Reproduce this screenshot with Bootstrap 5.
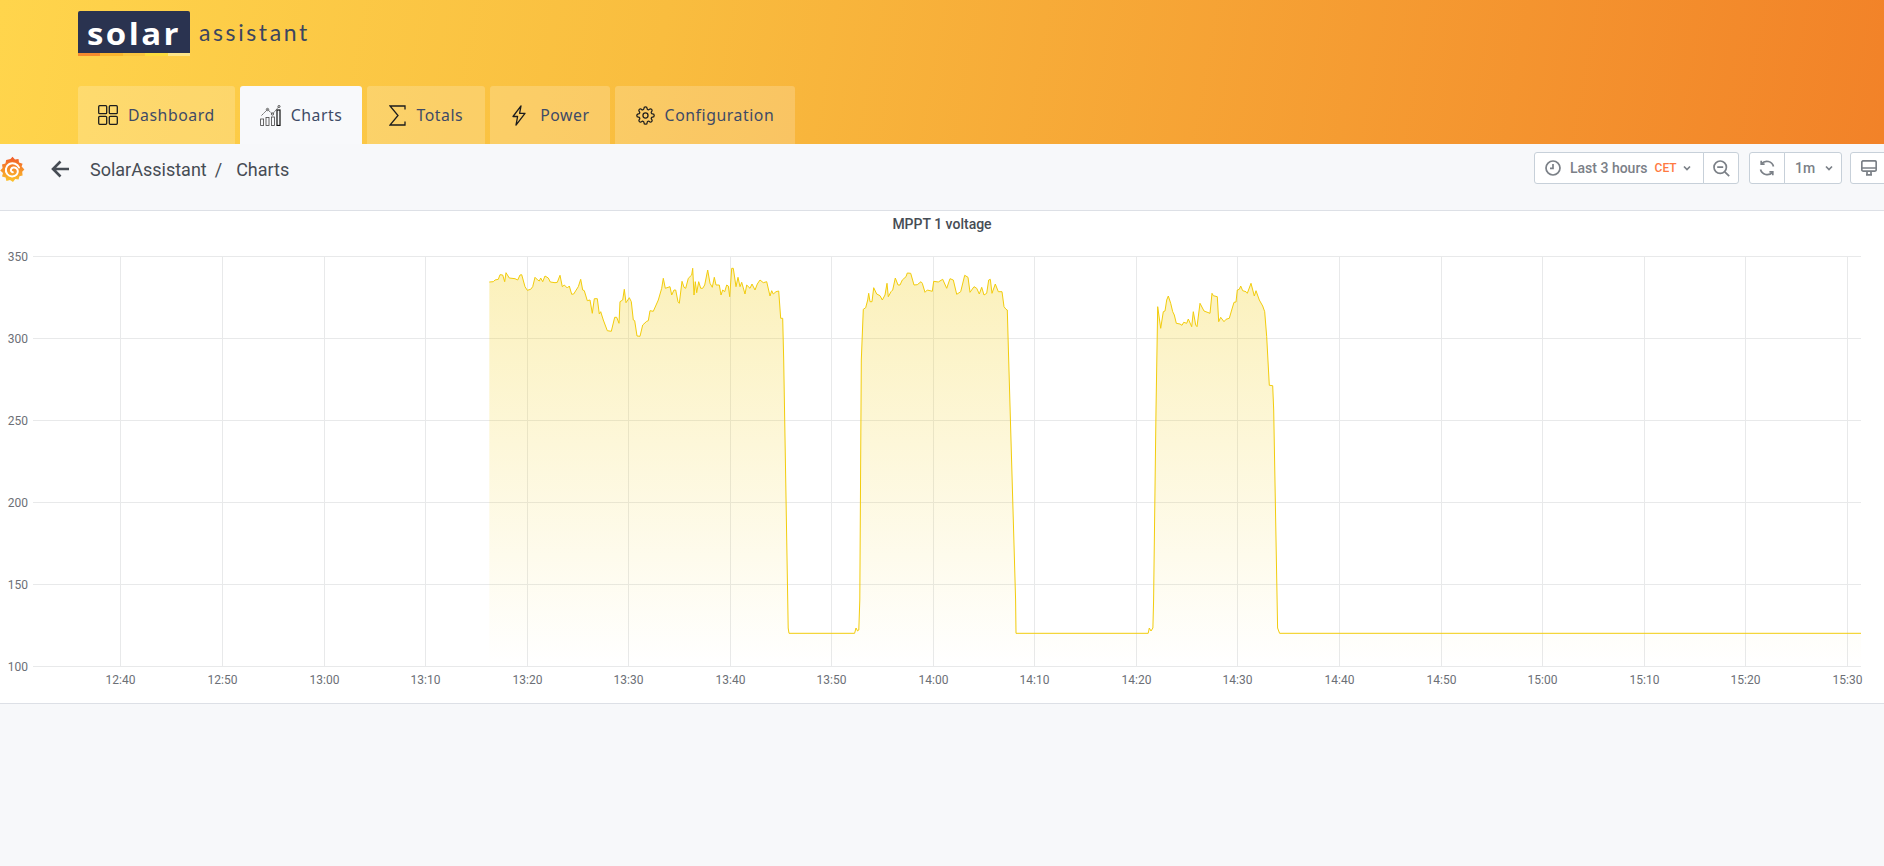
<!DOCTYPE html>
<html lang="en">
<head>
    <meta charset="UTF-8">
    <meta name="viewport" content="width=device-width, initial-scale=1.0">
    <title>Solar Assistant - Charts</title>
    <link href="https://cdn.jsdelivr.net/npm/bootstrap@5.3.0/dist/css/bootstrap.min.css" rel="stylesheet">
    <style>
        html, body { height: 100%; }
        body { background: #f7f8fa; font-family: Roboto, "Liberation Sans", sans-serif; overflow: hidden; }

        .sa-header { height: 144px; padding: 11px 0 0 78px; background: linear-gradient(100deg, #ffd54c 0%, #f9bd3f 35%, #f28228 100%); }
        .sa-logo-box { width: 112px; height: 45px; background: #2a3350; border-radius: 2px; }
        .sa-logo-word { height: 42px; padding-top: 4px; color: #fff; font: 700 30px/38px "Open Sans", sans-serif; letter-spacing: 2.2px; text-align: center; transform: scaleX(1.1); }
        .sa-stripes { height: 3px; }
        .sa-stripes span { flex: 1; }
        .sa-assistant { margin-left: 9px; margin-top: 8px; font: 400 23px/26px Lato, sans-serif; letter-spacing: 2.6px; color: #3b4560; }
        .sa-tabs { margin-top: 30px; gap: 5px; }
        .sa-tab { height: 58px; padding: 0 20px; gap: 10px; border-radius: 3px 3px 0 0; background: rgba(255, 255, 255, .2); color: #3e4a66; font: 400 15.8px "Noto Sans", sans-serif; letter-spacing: .55px; text-decoration: none; }
        .sa-tab.active { background: #f8f9fb; }
        .sa-tab svg { fill: none; stroke: #1d1d1d; stroke-width: 1.3; flex: none; }
        .sa-tab-totals { padding: 0 22px; }
        .sa-tab-power { padding: 0 20px 0 22px; }
        .sa-tab-config { padding: 0 21px; }

        .sa-toolbar { height: 67px; border-bottom: 1px solid #dde0e6; padding: 8px 0 0 0; overflow: hidden; }
        .sa-title-row { height: 34px; }
        .sa-crumbs { color: #464c54; font-size: 18px; margin-left: 20px; }
        .sa-back { margin-left: 26px; }
        .sa-tool { height: 32px; padding: 0 10px; background: #fff !important; border: 1px solid #c7d0d9 !important; border-radius: 3px; color: #7b8087 !important; font-size: 14px; font-weight: 500; display: flex; align-items: center; gap: 5px; white-space: nowrap; }
        .sa-tool svg { fill: none; stroke: #7b8087; stroke-width: 1.7; flex: none; }
        .sa-cet { color: #ff7941; font-size: 12px; margin-left: 2px; }
        .sa-tools { margin-left: auto; margin-right: -6px; }
        .sa-group-time { margin-right: 10px; }
        .sa-group-refresh { margin-right: 8px; }

        .sa-panel { border: 0; border-bottom: 1px solid #dde0e6; border-radius: 0; height: 493px; }
        .sa-panel-title { height: 26px; line-height: 26px; text-align: center; font-size: 14px; font-weight: 500; color: #464c54; }
        .sa-chart { display: block; }
        .sa-chart text { font: 12px Roboto, sans-serif; fill: #6c6f76; }
    </style>
</head>
<body>
    <header class="sa-header">
        <div class="d-flex">
            <div class="sa-logo-box">
                <div class="sa-logo-word">solar</div>
                <div class="sa-stripes d-flex">
                    <span style="background:#f58a2e"></span>
                    <span style="background:#f9b62f"></span>
                    <span style="background:#fac53f"></span>
                    <span style="background:#fbdc3e"></span>
                    <span style="background:#fde68a"></span>
                </div>
            </div>
            <div class="sa-assistant">assistant</div>
        </div>
        <nav class="sa-tabs d-flex">
            <a class="sa-tab d-flex align-items-center" href="#">
                <svg width="20" height="20" viewBox="0 0 20 20"><rect x=".7" y=".7" width="8" height="8" rx="1"/><rect x="11.3" y=".7" width="8" height="8" rx="1"/><rect x=".7" y="11.3" width="8" height="8" rx="1"/><rect x="11.3" y="11.3" width="8" height="8" rx="1"/></svg>
                Dashboard
            </a>
            <a class="sa-tab active d-flex align-items-center" href="#">
                <svg width="21" height="21" viewBox="0 0 21 21"><g stroke-width=".8" stroke="#444"><rect x=".6" y="14" width="3" height="6.5"/><rect x="6" y="12.5" width="3" height="8"/><rect x="11.5" y="12" width="3" height="8.5"/><path d="M1.5 10.5 7.5 4.5 12.5 9 19 1.5" stroke-dasharray="2 .6"/><circle cx="7.5" cy="4.5" r="1.2"/><circle cx="12.5" cy="9" r="1.2"/><circle cx="19" cy="1.5" r="1.1"/></g><rect x="17" y="5" width="3" height="15.5" stroke="#111" stroke-width="1.2"/></svg>
                Charts
            </a>
            <a class="sa-tab sa-tab-totals d-flex align-items-center" href="#">
                <svg width="17" height="21" viewBox="0 0 17 21"><path d="M16 4.5V1H1L9 10.5 1 20H16V16.5"/></svg>
                Totals
            </a>
            <a class="sa-tab sa-tab-power d-flex align-items-center" href="#">
                <svg width="14" height="21" viewBox="0 0 14 21" class="me-1"><path d="M9 .8 1 11.5h4.6L4 20.2 13 8.3H7.6L9 .8Z" stroke-linejoin="round"/></svg>
                Power
            </a>
            <a class="sa-tab sa-tab-config d-flex align-items-center" href="#">
                <svg width="19" height="19" viewBox="0 0 24 24"><g stroke-width="1.6"><circle cx="12" cy="12" r="3.2"/><path d="M19.4 15a1.65 1.65 0 0 0 .33 1.82l.06.06a2 2 0 0 1 0 2.83 2 2 0 0 1-2.83 0l-.06-.06a1.65 1.65 0 0 0-1.82-.33 1.65 1.65 0 0 0-1 1.51V21a2 2 0 0 1-2 2 2 2 0 0 1-2-2v-.09A1.65 1.65 0 0 0 9 19.4a1.65 1.65 0 0 0-1.82.33l-.06.06a2 2 0 0 1-2.83 0 2 2 0 0 1 0-2.83l.06-.06a1.65 1.65 0 0 0 .33-1.82 1.65 1.65 0 0 0-1.51-1H3a2 2 0 0 1-2-2 2 2 0 0 1 2-2h.09A1.65 1.65 0 0 0 4.6 9a1.65 1.65 0 0 0-.33-1.82l-.06-.06a2 2 0 0 1 0-2.83 2 2 0 0 1 2.83 0l.06.06a1.65 1.65 0 0 0 1.82.33H9a1.65 1.65 0 0 0 1-1.51V3a2 2 0 0 1 2-2 2 2 0 0 1 2 2v.09a1.65 1.65 0 0 0 1 1.51 1.65 1.65 0 0 0 1.82-.33l.06-.06a2 2 0 0 1 2.83 0 2 2 0 0 1 0 2.83l-.06.06a1.65 1.65 0 0 0-.33 1.82V9a1.65 1.65 0 0 0 1.51 1H21a2 2 0 0 1 2 2 2 2 0 0 1-2 2h-.09a1.65 1.65 0 0 0-1.51 1z"/></g></svg>
                Configuration
            </a>
        </nav>
    </header>

    <div class="sa-toolbar d-flex align-items-start">
        <div class="sa-title-row d-flex align-items-center">
            <svg width="25" height="27" viewBox="0 0 25 27">
                <defs><linearGradient id="gfLogo" x1="0" y1="1" x2="0" y2="0"><stop offset="0" stop-color="#fcc52c"/><stop offset="1" stop-color="#f15a29"/></linearGradient></defs>
                <path fill="url(#gfLogo)" d="M10.5 3 12.5 .8 15 3.5 18.5 3 19 6.4 22.6 7.8 21.6 10.6 24.4 13.6 22.2 15.8 22.6 19.6 19.4 20.2 18.6 23.6 15.2 23 13 26 10 24 6.4 25 5.6 21.6 2 20.4 3 17 .2 14.6 2.6 12 2 8.6 5.4 7.6 6.2 4Z"/>
                <path fill="none" stroke="#fff" stroke-width="2" stroke-linecap="round" d="M19 11.5C17.6 7.8 13 6.2 9.4 8 5.6 10 4.8 15 7.2 18c2.4 3 7 3.2 9.4.6 1.8-2 1.6-5-.4-6.4-1.8-1.2-4.4-.8-5.2 1.2-.5 1.4.4 2.8 1.8 2.8"/>
            </svg>
            <svg class="sa-back" width="19" height="18" viewBox="0 0 19 18"><path d="M18 9H2M9.5 1.5 2 9l7.5 7.5" fill="none" stroke="#464c54" stroke-width="2.6"/></svg>
            <div class="sa-crumbs d-flex">
                <span>SolarAssistant</span><span class="ms-2">/</span><span style="margin-left:14px">Charts</span>
            </div>
        </div>
        <div class="sa-tools d-flex">
            <div class="btn-group sa-group-time">
                <button class="btn sa-tool" style="width:170px">
                    <svg width="16" height="16" viewBox="0 0 16 16"><circle cx="8" cy="8" r="7"/><path d="M8 4v4.4H5"/></svg>
                    <span class="ms-1">Last 3 hours</span><span class="sa-cet">CET</span>
                    <svg width="10" height="10" viewBox="0 0 10 10"><path d="M2 3.5 5 6.5 8 3.5"/></svg>
                </button>
                <button class="btn sa-tool" style="width:36px;padding:0 9px">
                    <svg width="17" height="17" viewBox="0 0 17 17"><circle cx="7.2" cy="7.2" r="6.2"/><path d="M4.2 7.2h6M11.8 11.8l4.4 4.4"/></svg>
                </button>
            </div>
            <div class="btn-group sa-group-refresh">
                <button class="btn sa-tool" style="width:36px;padding:0 9px">
                    <svg width="16" height="16" viewBox="0 0 16 16"><path d="M14.5 6.5A7 7 0 0 0 2.6 3.6M1.5 9.5a7 7 0 0 0 11.9 2.9"/><path d="M2.2.8v3.4h3.4M13.8 15.2v-3.4h-3.4"/></svg>
                </button>
                <button class="btn sa-tool" style="width:58px">
                    1m
                    <svg width="10" height="10" viewBox="0 0 10 10" class="ms-1"><path d="M2 3.5 5 6.5 8 3.5"/></svg>
                </button>
            </div>
            <button class="btn sa-tool" style="width:40px;padding:0 10px">
                <svg width="16" height="16" viewBox="0 0 16 16"><rect x=".8" y=".8" width="14.4" height="10.4" rx="1.5"/><path d="M.8 8h14.4M5 14.8h6M6 11.2v3.6M10 11.2v3.6"/></svg>
            </button>
        </div>
    </div>

    <div class="card sa-panel">
        <div class="sa-panel-title">MPPT 1 voltage</div>
        <svg class="sa-chart" id="chart" width="1884" height="465" xmlns="http://www.w3.org/2000/svg">
            <defs>
                <linearGradient id="areaFill" gradientUnits="userSpaceOnUse" x1="0" y1="240" x2="0" y2="666">
                    <stop offset="0" stop-color="#f2cc0c" stop-opacity=".3"/>
                    <stop offset="1" stop-color="#f2cc0c" stop-opacity="0"/>
                </linearGradient>
            </defs>
            <g id="plot" transform="translate(0,-237)"></g>
        </svg>
    </div>

    <script>
        const BASE_Y = 666.5, LINE_Y = 633.3;

        // traced from the picture: [x, y] pairs, scaled to page coordinates
        function scaled(list, ox, oy) {
            const pts = [];
            for (let i = 0; i < list.length; i += 2) pts.push([ox + list[i] / 3, oy + list[i + 1] / 3]);
            return pts;
        }

        const seg1 = scaled([58,96,70,95,75,90,85,88,90,74,98,75,104,95,108,68,118,84,135,86,143,90,150,75,155,74,165,110,172,121,182,118,188,110,195,82,203,90,208,93,212,84,218,95,225,78,235,84,241,96,255,98,262,97,270,76,277,110,283,105,292,114,298,108,305,133,311,132,325,110,332,88,338,120,343,122,352,152,360,150,367,190,373,146,382,146,388,192,392,185,400,210,412,242,424,244,434,202,440,202,447,220,450,155,458,150,463,118,468,158,478,143,484,155,490,210,494,212,501,258,510,259,518,225,530,214,535,212,540,182,550,184,565,150,575,115,580,85,586,115,600,110,605,135,612,120,617,120,624,155,628,160,636,94,642,112,647,115,655,85,665,75,668,55,672,135,676,95,680,128,686,95,692,115,698,115,704,105,713,60,720,100,727,112,733,82,738,105,748,105,753,135,758,120,764,125,770,105,775,108,779,140,785,55,790,55,798,110,804,82,810,110,815,97,825,132,830,105,840,115,846,102,855,120,862,102,870,90,880,98,890,95,900,138,905,122,910,132,918,125,926,123,932,205,938,205,941,330], 470, 250);
        const seg2 = scaled([274,330,280,178,287,173,293,150,296,130,300,155,306,155,311,113,320,132,330,137,337,150,345,135,351,100,355,140,363,125,368,120,376,84,384,105,390,105,397,90,408,80,412,69,422,70,432,105,442,104,453,95,457,100,465,127,472,120,487,124,491,94,505,96,518,88,530,115,540,86,550,90,560,133,572,125,584,76,594,82,600,127,612,110,620,115,628,132,635,112,642,135,650,130,656,90,661,88,666,130,676,102,685,125,696,125,702,170,708,178,712,180,716,330], 770, 250);
        const seg3 = scaled([168,450,173,140,182,205,190,155,195,153,200,120,205,108,212,130,218,155,223,165,229,190,240,192,246,196,251,187,260,190,265,177,275,200,280,155,287,195,291,200,300,130,312,153,330,160,336,100,340,107,352,110,356,185,362,172,372,185,378,178,388,175,395,150,402,127,408,126,412,90,418,88,422,78,428,92,438,95,442,100,453,70,463,108,468,92,478,120,488,138,494,155,500,230,508,376,518,377,521,450], 1100, 260);

        const series = [
            ...seg1,
            [788.2, 628], [789, LINE_Y],
            [854.6, LINE_Y], [856, 628], [857.6, 631], [858.8, 630], [859.8, 600], ...seg2,
            [1015.6, 600], [1016, LINE_Y],
            [1148.2, LINE_Y], [1149.3, 628], [1151, 631], [1152.9, 628], [1153.6, 600], ...seg3,
            [1277.6, 628], [1279.6, LINE_Y],
            [1861, LINE_Y]
        ];

        const plot = document.getElementById('plot');
        const NS = 'http://www.w3.org/2000/svg';

        function add(tag, attrs, text) {
            const el = document.createElementNS(NS, tag);
            for (const k in attrs) el.setAttribute(k, attrs[k]);
            if (text) el.textContent = text;
            plot.appendChild(el);
        }

        // grid and y axis
        [350, 300, 250, 200, 150, 100].forEach((v, i) => {
            const y = 256.5 + i * 82;
            add('line', { x1: 33, x2: 1861, y1: y, y2: y, stroke: '#e8e9ea' });
            add('text', { x: 28, y: y + 4, 'text-anchor': 'end' }, String(v));
        });

        // grid and time axis, one label every ten minutes
        for (let i = 0; i < 18; i++) {
            const x = Math.round(120.4 + i * 101.55) + .5;
            const mins = 12 * 60 + 40 + i * 10;
            const label = Math.floor(mins / 60) + ':' + String(mins % 60).padStart(2, '0');
            add('line', { x1: x, x2: x, y1: 256.5, y2: 666.5, stroke: '#e8e9ea' });
            add('text', { x: x, y: 684, 'text-anchor': 'middle' }, label);
        }

        const line = series.map(p => p[0].toFixed(1) + ',' + p[1].toFixed(1)).join(' ');
        add('polygon', { points: '489.3,' + BASE_Y + ' ' + line + ' 1861,' + BASE_Y, fill: 'url(#areaFill)' });
        add('polyline', { points: line, fill: 'none', stroke: '#f2cc0c', 'stroke-width': 1, 'stroke-linejoin': 'round' });
    </script>
    <script src="https://cdn.jsdelivr.net/npm/bootstrap@5.3.0/dist/js/bootstrap.bundle.min.js"></script>
</body>
</html>
